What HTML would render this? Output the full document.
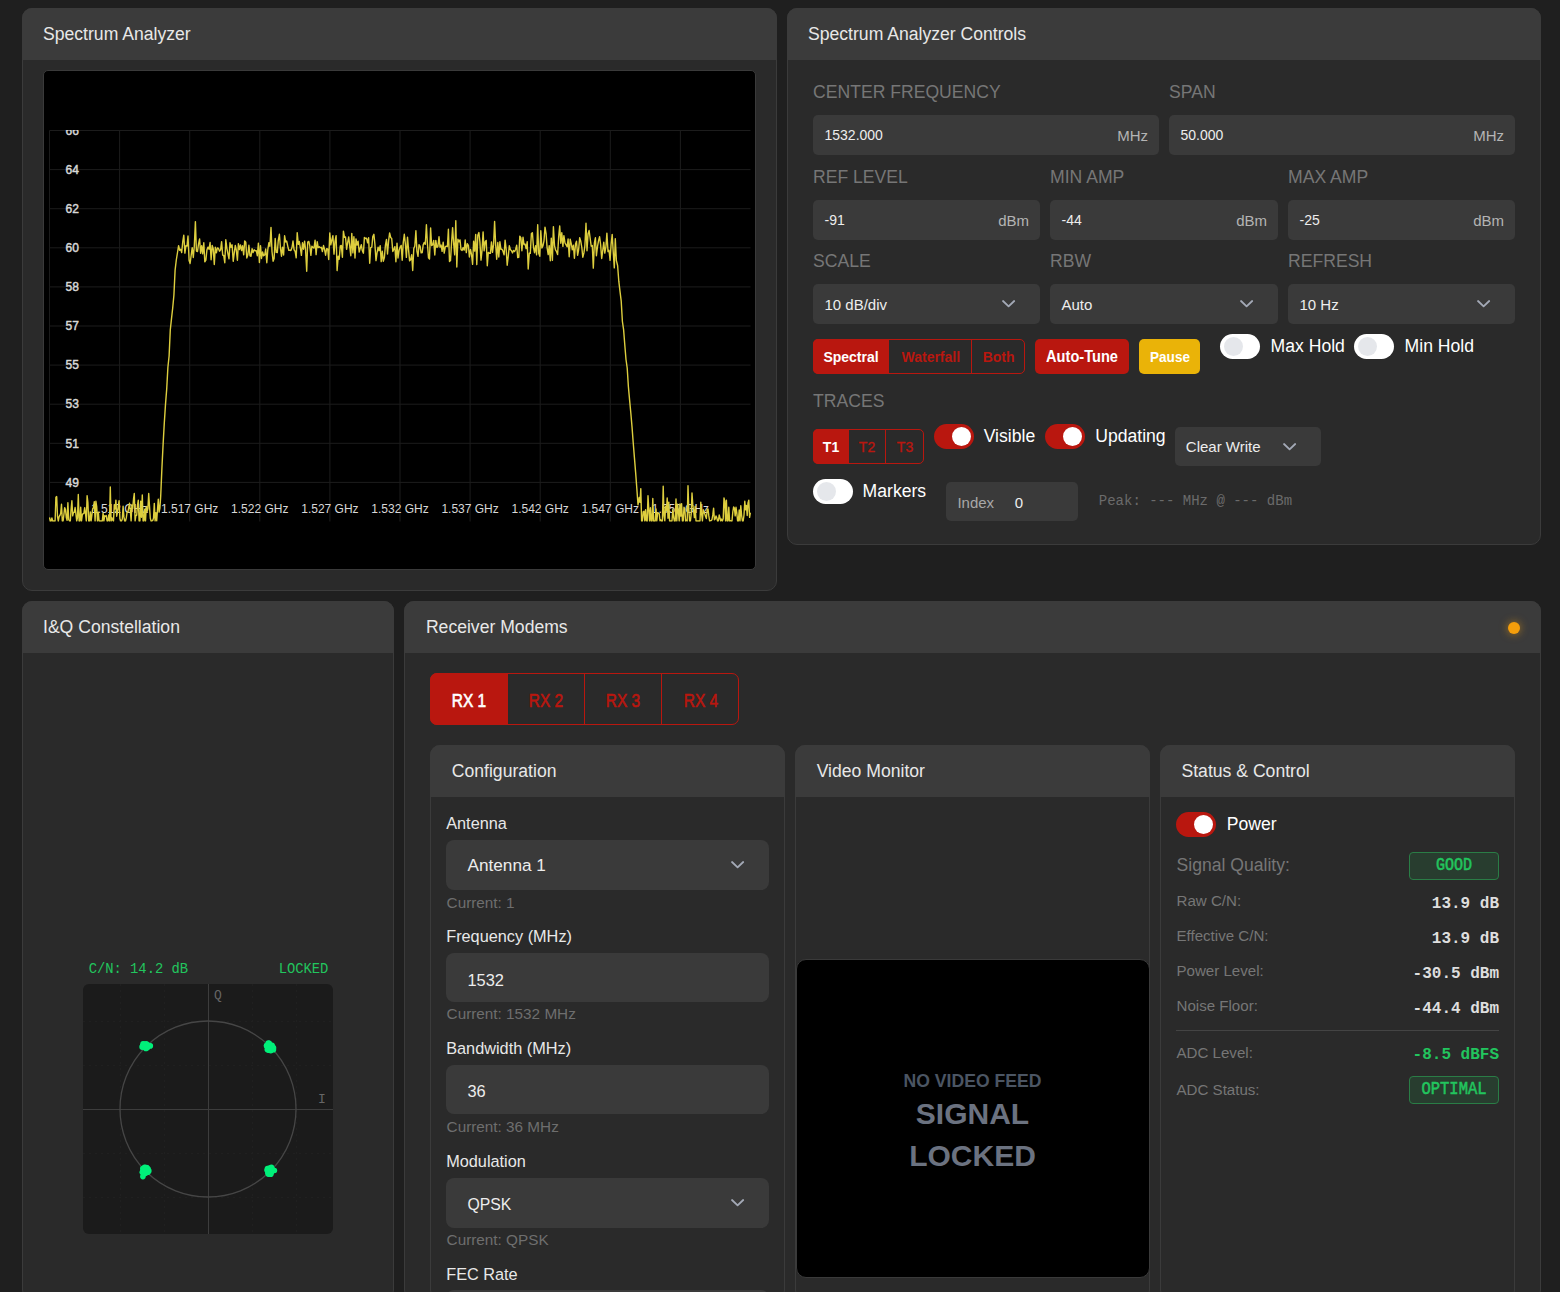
<!DOCTYPE html>
<html><head><meta charset="utf-8"><title>Spectrum Analyzer</title>
<style>
html,body{margin:0;padding:0;background:#1f1f1f;width:1560px;height:1292px;overflow:hidden;font-family:'Liberation Sans', sans-serif}
body>div,body>svg{position:absolute}
</style></head><body>
<div style="left:22px;top:8px;width:755px;height:583px;background:#2a2a2a;border:1px solid #3b3b3b;border-radius:10px;box-sizing:border-box;overflow:hidden"></div>
<div style="left:22px;top:8px;width:755px;height:52px;background:#3b3b3b;border-radius:10px 10px 0 0"></div>
<div style="left:43px;top:25.74px;font-family:'Liberation Sans', sans-serif;font-size:17.6px;line-height:17.6px;color:#e8e8e8;font-weight:400;white-space:pre;">Spectrum Analyzer</div>
<div style="left:43px;top:70px;width:713px;height:500px;background:#000;border-radius:5px;border:1px solid #3a3a3a;box-sizing:border-box"></div>
<svg style="left:0;top:0" width="800" height="600" viewBox="0 0 800 600">
<defs><clipPath id="pc"><rect x="49" y="130" width="702" height="391.8"/></clipPath></defs>
<g stroke="#1c1c1c" stroke-width="1"><line x1="49.5" y1="130.5" x2="49.5" y2="521.5"/><line x1="119.6" y1="130.5" x2="119.6" y2="521.5"/><line x1="189.7" y1="130.5" x2="189.7" y2="521.5"/><line x1="259.8" y1="130.5" x2="259.8" y2="521.5"/><line x1="329.9" y1="130.5" x2="329.9" y2="521.5"/><line x1="400.0" y1="130.5" x2="400.0" y2="521.5"/><line x1="470.1" y1="130.5" x2="470.1" y2="521.5"/><line x1="540.2" y1="130.5" x2="540.2" y2="521.5"/><line x1="610.3" y1="130.5" x2="610.3" y2="521.5"/><line x1="680.4" y1="130.5" x2="680.4" y2="521.5"/><line x1="49.5" y1="130.5" x2="750.5" y2="130.5"/><line x1="49.5" y1="169.6" x2="750.5" y2="169.6"/><line x1="49.5" y1="208.7" x2="750.5" y2="208.7"/><line x1="49.5" y1="247.8" x2="750.5" y2="247.8"/><line x1="49.5" y1="286.9" x2="750.5" y2="286.9"/><line x1="49.5" y1="326.0" x2="750.5" y2="326.0"/><line x1="49.5" y1="365.1" x2="750.5" y2="365.1"/><line x1="49.5" y1="404.2" x2="750.5" y2="404.2"/><line x1="49.5" y1="443.3" x2="750.5" y2="443.3"/><line x1="49.5" y1="482.4" x2="750.5" y2="482.4"/></g>
<g clip-path="url(#pc)" font-family="Liberation Sans" font-size="12" fill="#d8d8d8"><text x="65.5" y="134.7" stroke="#d8d8d8" stroke-width="0.45">66</text><text x="65.5" y="173.8" stroke="#d8d8d8" stroke-width="0.45">64</text><text x="65.5" y="212.9" stroke="#d8d8d8" stroke-width="0.45">62</text><text x="65.5" y="252.0" stroke="#d8d8d8" stroke-width="0.45">60</text><text x="65.5" y="291.1" stroke="#d8d8d8" stroke-width="0.45">58</text><text x="65.5" y="330.2" stroke="#d8d8d8" stroke-width="0.45">57</text><text x="65.5" y="369.3" stroke="#d8d8d8" stroke-width="0.45">55</text><text x="65.5" y="408.4" stroke="#d8d8d8" stroke-width="0.45">53</text><text x="65.5" y="447.5" stroke="#d8d8d8" stroke-width="0.45">51</text><text x="65.5" y="486.6" stroke="#d8d8d8" stroke-width="0.45">49</text><text x="119.6" y="513" text-anchor="middle">1.512 GHz</text><text x="189.7" y="513" text-anchor="middle">1.517 GHz</text><text x="259.8" y="513" text-anchor="middle">1.522 GHz</text><text x="329.9" y="513" text-anchor="middle">1.527 GHz</text><text x="400.0" y="513" text-anchor="middle">1.532 GHz</text><text x="470.1" y="513" text-anchor="middle">1.537 GHz</text><text x="540.2" y="513" text-anchor="middle">1.542 GHz</text><text x="610.3" y="513" text-anchor="middle">1.547 GHz</text><text x="680.4" y="513" text-anchor="middle">1.552 GHz</text></g>
<path d="M49.5,517.4 L50.3,521.0 L51.1,521.0 L51.9,518.0 L52.7,521.0 L53.5,521.0 L54.3,521.0 L55.1,521.0 L55.9,497.3 L56.7,496.6 L57.5,516.7 L58.3,521.0 L59.1,516.7 L59.9,515.5 L60.7,513.2 L61.5,504.2 L62.3,521.0 L63.1,521.0 L63.9,514.7 L64.7,507.6 L65.5,509.7 L66.3,517.6 L67.1,520.3 L67.9,502.7 L68.7,519.5 L69.5,521.0 L70.3,521.0 L71.1,509.4 L71.9,500.8 L72.7,515.9 L73.5,512.4 L74.3,512.4 L75.1,507.5 L75.9,513.6 L76.7,521.0 L77.5,517.6 L78.3,494.4 L79.1,521.0 L79.9,521.0 L80.7,507.3 L81.5,521.0 L82.3,514.9 L83.1,513.7 L83.9,513.3 L84.7,507.6 L85.5,513.6 L86.3,521.0 L87.1,495.6 L87.9,502.6 L88.7,521.0 L89.5,521.0 L90.3,511.9 L91.1,521.0 L91.9,515.2 L92.7,508.7 L93.5,507.7 L94.3,501.7 L95.1,521.0 L95.9,501.3 L96.7,506.6 L97.5,521.0 L98.3,512.2 L99.1,521.0 L99.9,521.0 L100.7,521.0 L101.5,521.0 L102.3,521.0 L103.1,513.1 L103.9,521.0 L104.7,515.8 L105.5,516.3 L106.3,515.6 L107.1,521.0 L107.9,521.0 L108.7,515.0 L109.5,521.0 L110.3,487.0 L111.1,521.0 L111.9,517.8 L112.7,520.1 L113.5,521.0 L114.3,504.6 L115.1,509.0 L115.9,500.1 L116.7,516.2 L117.5,512.3 L118.3,505.8 L119.1,500.7 L119.9,518.5 L120.7,521.0 L121.5,521.0 L122.3,519.0 L123.1,506.3 L123.9,516.9 L124.7,521.0 L125.5,521.0 L126.3,517.9 L127.1,512.1 L127.9,512.4 L128.7,507.5 L129.5,503.3 L130.3,510.5 L131.1,521.0 L131.9,505.0 L132.7,508.5 L133.5,499.2 L134.3,493.4 L135.1,521.0 L135.9,515.4 L136.7,515.3 L137.5,505.1 L138.3,500.2 L139.1,521.0 L139.9,521.0 L140.7,501.1 L141.5,517.3 L142.3,495.0 L143.1,521.0 L143.9,521.0 L144.7,509.3 L145.5,521.0 L146.3,506.4 L147.1,511.6 L147.9,508.7 L148.7,493.5 L149.5,506.0 L150.3,518.3 L151.1,521.0 L151.9,521.0 L152.7,520.4 L153.5,518.2 L154.3,503.4 L155.1,521.0 L155.9,512.6 L156.7,520.9 L157.5,509.7 L158.3,499.1 L159.1,512.1 L159.9,508.4 L160.7,496.1 L161.9,468.4 L163.1,444.4 L164.3,422.9 L165.5,404.4 L166.7,389.1 L167.9,367.2 L169.1,356.0 L170.3,329.8 L171.5,318.6 L172.7,308.0 L173.9,295.3 L175.1,270.1 L176.3,260.0 L177.5,252.5 L178.6,245.7 L179.6,250.2 L180.7,249.2 L181.7,252.5 L182.8,241.3 L183.8,235.2 L184.9,253.1 L185.9,245.8 L187.0,246.1 L188.0,236.0 L189.1,260.5 L190.1,263.5 L191.2,255.1 L192.2,247.6 L193.3,257.5 L194.3,246.2 L195.4,221.6 L196.4,251.0 L197.5,251.5 L198.5,244.2 L199.6,238.9 L200.6,253.3 L201.7,245.6 L202.7,253.8 L203.8,242.7 L204.8,261.8 L205.9,260.1 L206.9,250.1 L208.0,247.1 L209.0,249.3 L210.1,242.5 L211.1,259.7 L212.2,245.4 L213.2,248.4 L214.3,264.5 L215.3,247.2 L216.4,252.8 L217.4,247.9 L218.5,248.4 L219.5,251.2 L220.6,249.9 L221.6,241.6 L222.7,255.1 L223.7,255.4 L224.8,262.7 L225.8,239.8 L226.9,248.3 L227.9,253.6 L229.0,258.8 L230.0,242.8 L231.1,247.3 L232.1,244.8 L233.2,261.3 L234.2,253.3 L235.3,245.4 L236.3,250.0 L237.4,260.3 L238.4,243.6 L239.5,249.6 L240.5,244.9 L241.6,250.5 L242.6,245.8 L243.7,254.8 L244.7,240.9 L245.8,242.3 L246.8,258.0 L247.9,254.7 L248.9,245.2 L250.0,255.9 L251.0,256.3 L252.1,248.6 L253.1,252.6 L254.2,249.8 L255.2,250.7 L256.3,250.6 L257.3,255.7 L258.4,243.1 L259.4,262.5 L260.5,245.6 L261.5,258.5 L262.6,251.9 L263.6,255.7 L264.7,255.0 L265.7,249.0 L266.8,262.7 L267.8,249.6 L268.9,242.6 L269.9,246.3 L271.0,227.4 L272.0,251.5 L273.1,261.2 L274.1,258.4 L275.2,238.5 L276.2,252.4 L277.3,252.6 L278.3,240.3 L279.4,234.3 L280.4,247.5 L281.5,256.2 L282.5,247.1 L283.6,255.0 L284.6,235.8 L285.7,242.0 L286.7,241.1 L287.8,246.3 L288.8,250.4 L289.9,250.3 L290.9,250.5 L292.0,247.6 L293.0,241.0 L294.1,249.9 L295.1,251.2 L296.2,257.8 L297.2,232.6 L298.3,244.4 L299.3,241.5 L300.4,248.2 L301.4,255.4 L302.5,242.8 L303.5,249.2 L304.6,241.2 L305.6,250.2 L306.7,271.3 L307.7,242.1 L308.8,241.4 L309.8,245.8 L310.9,255.3 L311.9,246.1 L313.0,247.5 L314.0,248.1 L315.1,240.2 L316.1,254.6 L317.2,241.7 L318.2,247.6 L319.3,246.8 L320.3,247.7 L321.4,247.3 L322.4,251.6 L323.5,245.5 L324.5,249.2 L325.6,255.2 L326.6,248.7 L327.7,248.9 L328.7,259.5 L329.8,232.9 L330.8,244.9 L331.9,239.8 L332.9,235.6 L334.0,254.1 L335.0,241.4 L336.1,235.6 L337.1,270.6 L338.2,256.1 L339.2,259.2 L340.3,245.8 L341.3,245.4 L342.4,257.2 L343.4,231.2 L344.5,237.3 L345.5,237.0 L346.6,249.3 L347.6,242.9 L348.7,236.9 L349.7,245.8 L350.8,255.7 L351.8,233.4 L352.9,252.9 L353.9,236.8 L355.0,258.0 L356.0,238.9 L357.1,245.1 L358.1,241.3 L359.2,252.1 L360.2,248.3 L361.3,244.6 L362.3,250.6 L363.4,253.2 L364.4,237.4 L365.5,238.5 L366.5,238.2 L367.6,242.9 L368.6,237.8 L369.7,263.3 L370.7,247.6 L371.8,247.1 L372.8,236.6 L373.9,234.3 L374.9,244.3 L376.0,260.6 L377.0,253.1 L378.1,247.1 L379.1,250.7 L380.2,245.7 L381.2,261.6 L382.3,251.2 L383.3,261.3 L384.4,257.5 L385.4,245.5 L386.5,239.5 L387.5,254.0 L388.6,240.9 L389.6,233.0 L390.7,237.5 L391.7,238.4 L392.8,251.5 L393.8,249.4 L394.9,246.6 L395.9,261.8 L397.0,243.1 L398.0,258.0 L399.1,250.2 L400.1,247.2 L401.2,245.4 L402.2,260.3 L403.3,242.1 L404.3,234.3 L405.4,244.2 L406.4,257.4 L407.5,237.1 L408.5,249.1 L409.6,260.9 L410.6,259.8 L411.7,254.7 L412.7,270.5 L413.8,248.4 L414.8,246.2 L415.9,230.7 L416.9,251.1 L418.0,256.4 L419.0,244.8 L420.1,246.1 L421.1,252.9 L422.2,252.6 L423.2,244.7 L424.3,242.4 L425.3,244.3 L426.4,224.7 L427.4,243.4 L428.5,257.9 L429.5,259.0 L430.6,227.9 L431.6,245.6 L432.7,244.8 L433.7,240.4 L434.8,255.0 L435.8,240.4 L436.9,247.4 L437.9,246.7 L439.0,236.8 L440.0,247.1 L441.1,245.0 L442.1,251.3 L443.2,242.2 L444.2,253.1 L445.3,246.8 L446.3,246.1 L447.4,246.6 L448.4,229.3 L449.5,261.5 L450.5,260.6 L451.6,242.0 L452.6,227.6 L453.7,244.3 L454.7,254.9 L455.8,220.7 L456.8,267.0 L457.9,239.2 L458.9,241.9 L460.0,239.9 L461.0,249.6 L462.1,250.4 L463.1,247.6 L464.2,250.1 L465.2,240.0 L466.3,252.6 L467.3,243.7 L468.4,245.3 L469.4,257.0 L470.5,249.5 L471.5,254.4 L472.6,264.3 L473.6,241.2 L474.7,251.1 L475.7,234.5 L476.8,264.6 L477.8,235.2 L478.9,232.6 L479.9,241.9 L481.0,260.1 L482.0,250.7 L483.1,231.9 L484.1,250.8 L485.2,241.6 L486.2,240.4 L487.3,265.8 L488.3,252.4 L489.4,253.2 L490.4,253.4 L491.5,241.9 L492.5,252.4 L493.6,244.4 L494.6,221.5 L495.7,245.3 L496.7,259.2 L497.8,242.5 L498.8,257.0 L499.9,241.8 L500.9,249.4 L502.0,249.3 L503.0,251.3 L504.1,254.8 L505.1,240.1 L506.2,249.7 L507.2,265.2 L508.3,255.8 L509.3,245.8 L510.4,249.7 L511.4,250.5 L512.5,252.9 L513.5,250.4 L514.6,251.5 L515.6,249.5 L516.7,245.3 L517.7,257.6 L518.8,257.3 L519.8,236.1 L520.9,237.9 L521.9,250.7 L523.0,237.2 L524.0,244.5 L525.1,244.1 L526.1,248.6 L527.2,241.8 L528.2,269.0 L529.3,253.3 L530.3,253.4 L531.4,233.5 L532.4,232.7 L533.5,247.3 L534.5,252.7 L535.6,245.8 L536.6,254.8 L537.7,224.7 L538.7,253.2 L539.8,256.3 L540.8,230.8 L541.9,248.0 L542.9,246.0 L544.0,240.8 L545.0,227.1 L546.1,233.8 L547.1,247.6 L548.2,254.6 L549.2,245.6 L550.3,260.7 L551.3,238.1 L552.4,260.4 L553.4,226.6 L554.5,245.6 L555.5,249.9 L556.6,251.7 L557.6,254.6 L558.7,236.6 L559.7,226.0 L560.8,243.2 L561.8,232.7 L562.9,246.4 L563.9,235.6 L565.0,243.0 L566.0,244.6 L567.1,246.8 L568.1,239.0 L569.2,256.8 L570.2,239.2 L571.3,243.8 L572.3,249.8 L573.4,245.2 L574.4,258.2 L575.5,244.0 L576.5,241.2 L577.6,255.3 L578.6,250.0 L579.7,237.6 L580.7,240.9 L581.8,247.3 L582.8,257.3 L583.9,252.9 L584.9,245.8 L586.0,223.2 L587.0,250.8 L588.1,233.8 L589.1,230.5 L590.2,238.7 L591.2,246.2 L592.3,245.6 L593.3,268.1 L594.4,243.0 L595.4,237.8 L596.4,255.7 L597.5,246.6 L598.5,240.9 L599.6,236.8 L600.6,244.5 L601.7,258.5 L602.7,250.9 L603.8,242.2 L604.8,253.1 L605.9,246.8 L606.9,233.1 L608.0,251.6 L609.0,250.2 L610.1,260.3 L611.1,244.3 L612.2,234.4 L613.2,251.6 L614.3,267.9 L615.3,238.7 L616.4,260.7 L617.6,265.5 L618.8,281.2 L620.0,291.4 L621.2,301.0 L622.4,321.5 L623.6,329.6 L624.8,345.0 L626.0,359.5 L627.2,368.0 L628.4,386.7 L629.6,400.1 L630.8,412.8 L632.0,426.6 L633.2,442.5 L634.4,457.4 L635.6,472.1 L636.8,488.1 L638.0,504.8 L639.2,497.5 L640.0,502.4 L640.8,488.6 L641.6,521.0 L642.4,521.0 L643.2,511.9 L644.0,511.2 L644.8,521.0 L645.6,509.7 L646.4,520.8 L647.2,521.0 L648.0,495.7 L648.8,509.7 L649.6,521.0 L650.4,507.7 L651.2,521.0 L652.0,521.0 L652.8,498.5 L653.6,521.0 L654.4,521.0 L655.2,521.0 L656.0,508.9 L656.8,521.0 L657.6,513.4 L658.4,512.9 L659.2,513.7 L660.0,520.8 L660.8,519.8 L661.6,521.0 L662.4,521.0 L663.2,486.3 L664.0,515.6 L664.8,520.9 L665.6,506.2 L666.4,510.7 L667.2,498.0 L668.0,518.3 L668.8,502.1 L669.6,521.0 L670.4,521.0 L671.2,521.0 L672.0,521.0 L672.8,509.2 L673.6,517.0 L674.4,521.0 L675.2,521.0 L676.0,499.0 L676.8,521.0 L677.6,504.1 L678.4,511.3 L679.2,521.0 L680.0,504.0 L680.8,516.1 L681.6,503.6 L682.4,521.0 L683.2,521.0 L684.0,507.3 L684.8,508.8 L685.6,521.0 L686.4,520.2 L687.2,521.0 L688.0,485.7 L688.8,509.7 L689.6,521.0 L690.4,521.0 L691.2,514.2 L692.0,493.0 L692.8,504.9 L693.6,510.7 L694.4,517.6 L695.2,506.2 L696.0,521.0 L696.8,521.0 L697.6,521.0 L698.4,521.0 L699.2,521.0 L700.0,521.0 L700.8,502.3 L701.6,513.8 L702.4,521.0 L703.2,509.7 L704.0,512.6 L704.8,514.0 L705.6,516.5 L706.4,518.5 L707.2,509.3 L708.0,509.0 L708.8,515.7 L709.6,521.0 L710.4,520.7 L711.2,520.6 L712.0,519.5 L712.8,514.9 L713.6,508.1 L714.4,519.7 L715.2,518.9 L716.0,515.9 L716.8,517.8 L717.6,521.0 L718.4,520.8 L719.2,515.0 L720.0,518.0 L720.8,521.0 L721.6,519.1 L722.4,521.0 L723.2,518.5 L724.0,497.9 L724.8,501.4 L725.6,521.0 L726.4,500.2 L727.2,521.0 L728.0,521.0 L728.8,507.3 L729.6,521.0 L730.4,520.6 L731.2,521.0 L732.0,521.0 L732.8,512.0 L733.6,507.0 L734.4,508.2 L735.2,515.9 L736.0,507.3 L736.8,512.7 L737.6,521.0 L738.4,521.0 L739.2,510.0 L740.0,521.0 L740.8,505.8 L741.6,515.3 L742.4,521.0 L743.2,521.0 L744.0,515.0 L744.8,501.2 L745.6,509.8 L746.4,505.4 L747.2,515.5 L748.0,502.9 L748.8,500.2 L749.6,517.4 L750.4,512.6" fill="none" stroke="#ddce3e" stroke-width="1.4" stroke-linejoin="round" clip-path="url(#pc)"/>
</svg>
<div style="left:787px;top:8px;width:754px;height:537px;background:#2a2a2a;border:1px solid #3b3b3b;border-radius:10px;box-sizing:border-box;overflow:hidden"></div>
<div style="left:787px;top:8px;width:754px;height:52px;background:#3b3b3b;border-radius:10px 10px 0 0"></div>
<div style="left:808px;top:25.74px;font-family:'Liberation Sans', sans-serif;font-size:17.6px;line-height:17.6px;color:#e8e8e8;font-weight:400;white-space:pre;">Spectrum Analyzer Controls</div>
<div style="left:813px;top:83.94px;font-family:'Liberation Sans', sans-serif;font-size:17.6px;line-height:17.6px;color:#767676;font-weight:400;white-space:pre;">CENTER FREQUENCY</div>
<div style="left:1169px;top:83.94px;font-family:'Liberation Sans', sans-serif;font-size:17.6px;line-height:17.6px;color:#767676;font-weight:400;white-space:pre;">SPAN</div>
<div style="left:813px;top:115px;width:346px;height:40px;background:#3a3a3a;border-radius:5px"></div>
<div style="left:824.5px;top:128.40px;font-family:'Liberation Sans', sans-serif;font-size:14px;line-height:14px;color:#ededed;font-weight:400;white-space:pre;">1532.000</div>
<div style="right:412px;top:128.35px;font-family:'Liberation Sans', sans-serif;font-size:15px;line-height:15px;color:#b4b4b4;font-weight:400;white-space:pre;">MHz</div>
<div style="left:1169px;top:115px;width:346px;height:40px;background:#3a3a3a;border-radius:5px"></div>
<div style="left:1180.5px;top:128.40px;font-family:'Liberation Sans', sans-serif;font-size:14px;line-height:14px;color:#ededed;font-weight:400;white-space:pre;">50.000</div>
<div style="right:56px;top:128.35px;font-family:'Liberation Sans', sans-serif;font-size:15px;line-height:15px;color:#b4b4b4;font-weight:400;white-space:pre;">MHz</div>
<div style="left:813px;top:169.04px;font-family:'Liberation Sans', sans-serif;font-size:17.6px;line-height:17.6px;color:#767676;font-weight:400;white-space:pre;">REF LEVEL</div>
<div style="left:1050px;top:169.04px;font-family:'Liberation Sans', sans-serif;font-size:17.6px;line-height:17.6px;color:#767676;font-weight:400;white-space:pre;">MIN AMP</div>
<div style="left:1288px;top:169.04px;font-family:'Liberation Sans', sans-serif;font-size:17.6px;line-height:17.6px;color:#767676;font-weight:400;white-space:pre;">MAX AMP</div>
<div style="left:813px;top:200px;width:227px;height:40px;background:#3a3a3a;border-radius:5px"></div>
<div style="left:824.5px;top:213.40px;font-family:'Liberation Sans', sans-serif;font-size:14px;line-height:14px;color:#ededed;font-weight:400;white-space:pre;">-91</div>
<div style="right:531px;top:213.35px;font-family:'Liberation Sans', sans-serif;font-size:15px;line-height:15px;color:#b4b4b4;font-weight:400;white-space:pre;">dBm</div>
<div style="left:1050px;top:200px;width:228px;height:40px;background:#3a3a3a;border-radius:5px"></div>
<div style="left:1061.5px;top:213.40px;font-family:'Liberation Sans', sans-serif;font-size:14px;line-height:14px;color:#ededed;font-weight:400;white-space:pre;">-44</div>
<div style="right:293px;top:213.35px;font-family:'Liberation Sans', sans-serif;font-size:15px;line-height:15px;color:#b4b4b4;font-weight:400;white-space:pre;">dBm</div>
<div style="left:1288px;top:200px;width:227px;height:40px;background:#3a3a3a;border-radius:5px"></div>
<div style="left:1299.5px;top:213.40px;font-family:'Liberation Sans', sans-serif;font-size:14px;line-height:14px;color:#ededed;font-weight:400;white-space:pre;">-25</div>
<div style="right:56px;top:213.35px;font-family:'Liberation Sans', sans-serif;font-size:15px;line-height:15px;color:#b4b4b4;font-weight:400;white-space:pre;">dBm</div>
<div style="left:813px;top:253.24px;font-family:'Liberation Sans', sans-serif;font-size:17.6px;line-height:17.6px;color:#767676;font-weight:400;white-space:pre;">SCALE</div>
<div style="left:1050px;top:253.24px;font-family:'Liberation Sans', sans-serif;font-size:17.6px;line-height:17.6px;color:#767676;font-weight:400;white-space:pre;">RBW</div>
<div style="left:1288px;top:253.24px;font-family:'Liberation Sans', sans-serif;font-size:17.6px;line-height:17.6px;color:#767676;font-weight:400;white-space:pre;">REFRESH</div>
<div style="left:813px;top:284px;width:227px;height:40px;background:#3a3a3a;border-radius:5px"></div>
<div style="left:824.5px;top:297.25px;font-family:'Liberation Sans', sans-serif;font-size:15px;line-height:15px;color:#ededed;font-weight:400;white-space:pre;">10 dB/div</div>
<svg style="left:1000.1999999999999px;top:298.1px" width="17.2" height="11.4"><path d="M3,3 L8.6,8.4 L14.2,3" fill="none" stroke="#a3a9b6" stroke-width="1.8" stroke-linecap="round" stroke-linejoin="round"/></svg>
<div style="left:1050px;top:284px;width:228px;height:40px;background:#3a3a3a;border-radius:5px"></div>
<div style="left:1061.5px;top:297.25px;font-family:'Liberation Sans', sans-serif;font-size:15px;line-height:15px;color:#ededed;font-weight:400;white-space:pre;">Auto</div>
<svg style="left:1238.2px;top:298.1px" width="17.2" height="11.4"><path d="M3,3 L8.6,8.4 L14.2,3" fill="none" stroke="#a3a9b6" stroke-width="1.8" stroke-linecap="round" stroke-linejoin="round"/></svg>
<div style="left:1288px;top:284px;width:227px;height:40px;background:#3a3a3a;border-radius:5px"></div>
<div style="left:1299.5px;top:297.25px;font-family:'Liberation Sans', sans-serif;font-size:15px;line-height:15px;color:#ededed;font-weight:400;white-space:pre;">10 Hz</div>
<svg style="left:1475.2px;top:298.1px" width="17.2" height="11.4"><path d="M3,3 L8.6,8.4 L14.2,3" fill="none" stroke="#a3a9b6" stroke-width="1.8" stroke-linecap="round" stroke-linejoin="round"/></svg>
<div style="left:813px;top:339px;width:212px;height:35px;border:1px solid #b9170f;border-radius:5px;box-sizing:border-box"></div>
<div style="left:813px;top:339px;width:76px;height:35px;background:#b9170f;border-radius:5px 0 0 5px"></div>
<div style="left:971px;top:339px;width:1px;height:35px;background:#b9170f"></div>
<div style="left:551px;width:600px;text-align:center;top:349.90px;font-family:'Liberation Sans', sans-serif;font-size:14px;line-height:14px;color:#fff;font-weight:700;white-space:pre;transform:scaleY(1.1)">Spectral</div>
<div style="left:630.8px;width:600px;text-align:center;top:349.90px;font-family:'Liberation Sans', sans-serif;font-size:14px;line-height:14px;color:#b9170f;font-weight:700;white-space:pre;transform:scaleY(1.1)">Waterfall</div>
<div style="left:698.6px;width:600px;text-align:center;top:349.90px;font-family:'Liberation Sans', sans-serif;font-size:14px;line-height:14px;color:#b9170f;font-weight:700;white-space:pre;transform:scaleY(1.1)">Both</div>
<div style="left:1035px;top:339px;width:94px;height:35px;background:#b9170f;border-radius:5px"></div>
<div style="left:782px;width:600px;text-align:center;top:349.59px;font-family:'Liberation Sans', sans-serif;font-size:14.6px;line-height:14.6px;color:#fff;font-weight:700;white-space:pre;transform:scaleY(1.1)">Auto-Tune</div>
<div style="left:1139px;top:339px;width:61px;height:35px;background:#eab308;border-radius:5px"></div>
<div style="left:869.5px;width:600px;text-align:center;top:349.90px;font-family:'Liberation Sans', sans-serif;font-size:14px;line-height:14px;color:#fff;font-weight:700;white-space:pre;transform:scale(0.97,1.1)">Pause</div>
<div style="left:1220px;top:334px;width:40px;height:25px;background:#fff;border-radius:13px"></div>
<div style="left:1224px;top:337px;width:19px;height:19px;border-radius:50%;background:#e5e7eb"></div>
<div style="left:1270.6px;top:337.94px;font-family:'Liberation Sans', sans-serif;font-size:17.6px;line-height:17.6px;color:#fff;font-weight:400;white-space:pre;">Max Hold</div>
<div style="left:1354px;top:334px;width:40px;height:25px;background:#fff;border-radius:13px"></div>
<div style="left:1358px;top:337px;width:19px;height:19px;border-radius:50%;background:#e5e7eb"></div>
<div style="left:1404.6px;top:337.94px;font-family:'Liberation Sans', sans-serif;font-size:17.6px;line-height:17.6px;color:#fff;font-weight:400;white-space:pre;">Min Hold</div>
<div style="left:813px;top:393.04px;font-family:'Liberation Sans', sans-serif;font-size:17.6px;line-height:17.6px;color:#767676;font-weight:400;white-space:pre;">TRACES</div>
<div style="left:813px;top:429px;width:111px;height:35px;border:1px solid #b9170f;border-radius:5px;box-sizing:border-box"></div>
<div style="left:813px;top:429px;width:36px;height:35px;background:#b9170f;border-radius:5px 0 0 5px"></div>
<div style="left:885px;top:429px;width:1px;height:35px;background:#b9170f"></div>
<div style="left:531px;width:600px;text-align:center;top:439.60px;font-family:'Liberation Sans', sans-serif;font-size:14px;line-height:14px;color:#fff;font-weight:700;white-space:pre;">T1</div>
<div style="left:567px;width:600px;text-align:center;top:439.60px;font-family:'Liberation Sans', sans-serif;font-size:14px;line-height:14px;color:#b9170f;font-weight:400;white-space:pre;-webkit-text-stroke:0.35px #b9170f">T2</div>
<div style="left:605px;width:600px;text-align:center;top:439.60px;font-family:'Liberation Sans', sans-serif;font-size:14px;line-height:14px;color:#b9170f;font-weight:400;white-space:pre;-webkit-text-stroke:0.35px #b9170f">T3</div>
<div style="left:934px;top:424px;width:40px;height:25px;background:#b9170f;border-radius:13px"></div>
<div style="left:952px;top:427px;width:19px;height:19px;border-radius:50%;background:#fff"></div>
<div style="left:983.7px;top:428.34px;font-family:'Liberation Sans', sans-serif;font-size:17.6px;line-height:17.6px;color:#fff;font-weight:400;white-space:pre;">Visible</div>
<div style="left:1045px;top:424px;width:40px;height:25px;background:#b9170f;border-radius:13px"></div>
<div style="left:1063px;top:427px;width:19px;height:19px;border-radius:50%;background:#fff"></div>
<div style="left:1095.2px;top:428.34px;font-family:'Liberation Sans', sans-serif;font-size:17.6px;line-height:17.6px;color:#fff;font-weight:400;white-space:pre;">Updating</div>
<div style="left:1175px;top:427px;width:146px;height:39px;background:#3a3a3a;border-radius:5px"></div>
<div style="left:1185.8px;top:439.25px;font-family:'Liberation Sans', sans-serif;font-size:15px;line-height:15px;color:#ededed;font-weight:400;white-space:pre;">Clear Write</div>
<svg style="left:1281.1000000000001px;top:440.5px" width="17.2" height="11.4"><path d="M3,3 L8.6,8.4 L14.2,3" fill="none" stroke="#a3a9b6" stroke-width="1.8" stroke-linecap="round" stroke-linejoin="round"/></svg>
<div style="left:813px;top:479px;width:40px;height:25px;background:#fff;border-radius:13px"></div>
<div style="left:817px;top:482px;width:19px;height:19px;border-radius:50%;background:#e5e7eb"></div>
<div style="left:862.6px;top:482.64px;font-family:'Liberation Sans', sans-serif;font-size:17.6px;line-height:17.6px;color:#fff;font-weight:400;white-space:pre;">Markers</div>
<div style="left:946px;top:482px;width:132px;height:39px;background:#3a3a3a;border-radius:5px"></div>
<div style="left:957.4px;top:494.65px;font-family:'Liberation Sans', sans-serif;font-size:15px;line-height:15px;color:#a8a8a8;font-weight:400;white-space:pre;">Index</div>
<div style="left:1014.7px;top:494.65px;font-family:'Liberation Sans', sans-serif;font-size:15px;line-height:15px;color:#ededed;font-weight:400;white-space:pre;">0</div>
<div style="left:1098.8px;top:494.36px;font-family:'Liberation Mono', monospace;font-size:14px;line-height:14px;color:#6b6b6b;font-weight:400;white-space:pre;">Peak: --- MHz @ --- dBm</div>
<div style="left:22px;top:601px;width:372px;height:699px;background:#2a2a2a;border:1px solid #3b3b3b;border-radius:10px;box-sizing:border-box;overflow:hidden"></div>
<div style="left:22px;top:601px;width:372px;height:52px;background:#3b3b3b;border-radius:10px 10px 0 0"></div>
<div style="left:43px;top:618.94px;font-family:'Liberation Sans', sans-serif;font-size:17.6px;line-height:17.6px;color:#e8e8e8;font-weight:400;white-space:pre;">I&amp;Q Constellation</div>
<div style="left:88.7px;top:962.51px;font-family:'Liberation Mono', monospace;font-size:13.8px;line-height:13.8px;color:#22c55e;font-weight:400;white-space:pre;">C/N: 14.2 dB</div>
<div style="right:1231.7px;top:962.51px;font-family:'Liberation Mono', monospace;font-size:13.8px;line-height:13.8px;color:#22c55e;font-weight:400;white-space:pre;">LOCKED</div>
<div style="left:83px;top:984px;width:250px;height:250px;background:#1b1b1b;border-radius:6px"></div>
<svg style="left:0;top:0" width="400" height="1292" viewBox="0 0 400 1292">
<g stroke="#202020" stroke-width="1" stroke-dasharray="2,4"><line x1="120.5" y1="984" x2="120.5" y2="1234"/><line x1="164.5" y1="984" x2="164.5" y2="1234"/><line x1="252.5" y1="984" x2="252.5" y2="1234"/><line x1="296.5" y1="984" x2="296.5" y2="1234"/><line x1="83" y1="1021.5" x2="333" y2="1021.5"/><line x1="83" y1="1065.5" x2="333" y2="1065.5"/><line x1="83" y1="1153.5" x2="333" y2="1153.5"/><line x1="83" y1="1197.5" x2="333" y2="1197.5"/></g>
<line x1="208.5" y1="984" x2="208.5" y2="1234" stroke="#3d3d3d" stroke-width="1"/>
<line x1="83" y1="1109.5" x2="333" y2="1109.5" stroke="#3d3d3d" stroke-width="1"/>
<circle cx="208" cy="1109" r="88" fill="none" stroke="#464646" stroke-width="1.3"/>
<g fill="#00f07a"><circle cx="143.0" cy="1046.6" r="2.8"/><circle cx="146.6" cy="1045.2" r="2.8"/><circle cx="142.9" cy="1045.9" r="2.8"/><circle cx="145.8" cy="1047.8" r="2.8"/><circle cx="143.1" cy="1043.9" r="2.8"/><circle cx="146.1" cy="1046.8" r="2.8"/><circle cx="147.5" cy="1047.6" r="2.8"/><circle cx="144.8" cy="1045.6" r="2.8"/><circle cx="149.1" cy="1045.5" r="2.8"/><circle cx="143.7" cy="1044.2" r="2.8"/><circle cx="145.2" cy="1046.2" r="2.8"/><circle cx="144.4" cy="1045.9" r="2.8"/><circle cx="145.4" cy="1047.1" r="2.8"/><circle cx="146.8" cy="1046.3" r="2.8"/><circle cx="142.1" cy="1047.1" r="2.8"/><circle cx="142.7" cy="1045.7" r="2.8"/><circle cx="142.6" cy="1046.0" r="2.8"/><circle cx="143.8" cy="1046.3" r="2.8"/><circle cx="150.3" cy="1045.9" r="2.8"/><circle cx="146.3" cy="1043.9" r="2.8"/><circle cx="144.5" cy="1047.1" r="2.8"/><circle cx="144.9" cy="1046.6" r="2.8"/><circle cx="145.2" cy="1044.4" r="2.8"/><circle cx="145.9" cy="1044.7" r="2.8"/><circle cx="148.0" cy="1045.2" r="2.8"/><circle cx="146.1" cy="1046.0" r="2.8"/><circle cx="146.5" cy="1045.0" r="2.8"/><circle cx="146.6" cy="1045.8" r="2.8"/><circle cx="147.0" cy="1047.0" r="2.8"/><circle cx="145.2" cy="1044.8" r="2.8"/><circle cx="146.2" cy="1046.7" r="2.8"/><circle cx="147.6" cy="1045.4" r="2.8"/><circle cx="145.9" cy="1046.8" r="2.8"/><circle cx="145.5" cy="1046.3" r="2.8"/><circle cx="145.3" cy="1045.0" r="2.8"/><circle cx="143.4" cy="1045.4" r="2.8"/><circle cx="145.9" cy="1048.4" r="2.8"/><circle cx="146.6" cy="1047.7" r="2.8"/><circle cx="146.2" cy="1047.1" r="2.8"/><circle cx="145.3" cy="1047.2" r="2.8"/><circle cx="272.3" cy="1046.5" r="2.8"/><circle cx="268.4" cy="1050.1" r="2.8"/><circle cx="269.9" cy="1048.6" r="2.8"/><circle cx="270.9" cy="1045.2" r="2.8"/><circle cx="273.4" cy="1049.8" r="2.8"/><circle cx="269.8" cy="1048.2" r="2.8"/><circle cx="269.7" cy="1045.6" r="2.8"/><circle cx="269.3" cy="1047.6" r="2.8"/><circle cx="271.3" cy="1048.1" r="2.8"/><circle cx="269.6" cy="1049.2" r="2.8"/><circle cx="268.3" cy="1048.3" r="2.8"/><circle cx="271.3" cy="1046.5" r="2.8"/><circle cx="266.6" cy="1045.5" r="2.8"/><circle cx="269.9" cy="1047.8" r="2.8"/><circle cx="272.0" cy="1045.4" r="2.8"/><circle cx="269.5" cy="1048.0" r="2.8"/><circle cx="269.2" cy="1043.2" r="2.8"/><circle cx="270.8" cy="1050.7" r="2.8"/><circle cx="271.1" cy="1045.5" r="2.8"/><circle cx="268.8" cy="1047.4" r="2.8"/><circle cx="273.5" cy="1048.0" r="2.8"/><circle cx="269.7" cy="1049.5" r="2.8"/><circle cx="269.4" cy="1050.0" r="2.8"/><circle cx="268.4" cy="1046.2" r="2.8"/><circle cx="270.7" cy="1049.3" r="2.8"/><circle cx="270.5" cy="1047.5" r="2.8"/><circle cx="266.6" cy="1045.9" r="2.8"/><circle cx="268.5" cy="1046.1" r="2.8"/><circle cx="270.4" cy="1046.5" r="2.8"/><circle cx="270.8" cy="1047.1" r="2.8"/><circle cx="269.0" cy="1047.2" r="2.8"/><circle cx="270.2" cy="1048.4" r="2.8"/><circle cx="268.7" cy="1046.6" r="2.8"/><circle cx="267.3" cy="1049.6" r="2.8"/><circle cx="271.8" cy="1046.7" r="2.8"/><circle cx="268.7" cy="1045.0" r="2.8"/><circle cx="269.8" cy="1047.3" r="2.8"/><circle cx="273.0" cy="1047.4" r="2.8"/><circle cx="268.3" cy="1043.1" r="2.8"/><circle cx="271.8" cy="1047.3" r="2.8"/><circle cx="142.9" cy="1171.3" r="2.8"/><circle cx="142.9" cy="1176.6" r="2.8"/><circle cx="147.3" cy="1171.9" r="2.8"/><circle cx="145.2" cy="1167.6" r="2.8"/><circle cx="145.3" cy="1168.5" r="2.8"/><circle cx="146.5" cy="1167.6" r="2.8"/><circle cx="144.0" cy="1173.0" r="2.8"/><circle cx="148.1" cy="1169.1" r="2.8"/><circle cx="143.0" cy="1172.4" r="2.8"/><circle cx="146.9" cy="1169.4" r="2.8"/><circle cx="144.4" cy="1169.9" r="2.8"/><circle cx="143.6" cy="1169.9" r="2.8"/><circle cx="147.5" cy="1172.1" r="2.8"/><circle cx="148.8" cy="1170.9" r="2.8"/><circle cx="145.3" cy="1169.4" r="2.8"/><circle cx="145.3" cy="1168.9" r="2.8"/><circle cx="142.7" cy="1172.1" r="2.8"/><circle cx="147.8" cy="1172.3" r="2.8"/><circle cx="147.6" cy="1171.4" r="2.8"/><circle cx="144.4" cy="1171.1" r="2.8"/><circle cx="144.9" cy="1169.2" r="2.8"/><circle cx="142.8" cy="1168.6" r="2.8"/><circle cx="145.5" cy="1171.2" r="2.8"/><circle cx="144.7" cy="1173.3" r="2.8"/><circle cx="145.8" cy="1171.9" r="2.8"/><circle cx="147.4" cy="1169.7" r="2.8"/><circle cx="142.3" cy="1172.2" r="2.8"/><circle cx="144.4" cy="1173.1" r="2.8"/><circle cx="146.0" cy="1172.6" r="2.8"/><circle cx="146.7" cy="1167.7" r="2.8"/><circle cx="146.7" cy="1169.9" r="2.8"/><circle cx="144.3" cy="1170.3" r="2.8"/><circle cx="146.7" cy="1172.4" r="2.8"/><circle cx="147.1" cy="1168.3" r="2.8"/><circle cx="144.6" cy="1167.2" r="2.8"/><circle cx="145.3" cy="1172.0" r="2.8"/><circle cx="144.3" cy="1171.4" r="2.8"/><circle cx="145.9" cy="1172.6" r="2.8"/><circle cx="144.2" cy="1169.7" r="2.8"/><circle cx="144.3" cy="1173.8" r="2.8"/><circle cx="271.7" cy="1170.8" r="2.8"/><circle cx="270.4" cy="1171.2" r="2.8"/><circle cx="270.3" cy="1170.7" r="2.8"/><circle cx="269.5" cy="1169.0" r="2.8"/><circle cx="269.0" cy="1173.6" r="2.8"/><circle cx="270.9" cy="1171.1" r="2.8"/><circle cx="269.7" cy="1171.1" r="2.8"/><circle cx="270.6" cy="1170.0" r="2.8"/><circle cx="270.3" cy="1171.4" r="2.8"/><circle cx="268.8" cy="1169.7" r="2.8"/><circle cx="268.4" cy="1169.3" r="2.8"/><circle cx="271.4" cy="1167.2" r="2.8"/><circle cx="269.6" cy="1170.0" r="2.8"/><circle cx="269.0" cy="1171.2" r="2.8"/><circle cx="271.8" cy="1171.1" r="2.8"/><circle cx="269.8" cy="1170.0" r="2.8"/><circle cx="269.8" cy="1172.5" r="2.8"/><circle cx="269.4" cy="1169.2" r="2.8"/><circle cx="268.0" cy="1169.2" r="2.8"/><circle cx="267.8" cy="1172.8" r="2.8"/><circle cx="270.6" cy="1170.6" r="2.8"/><circle cx="272.3" cy="1169.9" r="2.8"/><circle cx="271.2" cy="1172.3" r="2.8"/><circle cx="267.5" cy="1168.5" r="2.8"/><circle cx="268.5" cy="1172.5" r="2.8"/><circle cx="272.1" cy="1169.0" r="2.8"/><circle cx="271.7" cy="1170.4" r="2.8"/><circle cx="269.4" cy="1170.1" r="2.8"/><circle cx="269.5" cy="1168.1" r="2.8"/><circle cx="268.4" cy="1169.0" r="2.8"/><circle cx="270.8" cy="1174.3" r="2.8"/><circle cx="274.4" cy="1170.5" r="2.8"/><circle cx="267.2" cy="1170.3" r="2.8"/><circle cx="268.5" cy="1174.2" r="2.8"/><circle cx="270.9" cy="1169.8" r="2.8"/><circle cx="271.5" cy="1171.9" r="2.8"/><circle cx="267.4" cy="1170.1" r="2.8"/><circle cx="269.6" cy="1171.0" r="2.8"/><circle cx="270.2" cy="1170.5" r="2.8"/><circle cx="270.3" cy="1170.1" r="2.8"/></g>
<text x="214" y="999" font-family="Liberation Mono" font-size="13" fill="#666">Q</text>
<text x="318" y="1103" font-family="Liberation Mono" font-size="13" fill="#666">I</text>
</svg>
<div style="left:404px;top:601px;width:1137px;height:699px;background:#2a2a2a;border:1px solid #3b3b3b;border-radius:10px;box-sizing:border-box;overflow:hidden"></div>
<div style="left:404px;top:601px;width:1137px;height:52px;background:#3b3b3b;border-radius:10px 10px 0 0"></div>
<div style="left:425.9px;top:618.94px;font-family:'Liberation Sans', sans-serif;font-size:17.6px;line-height:17.6px;color:#e8e8e8;font-weight:400;white-space:pre;">Receiver Modems</div>
<div style="left:1508px;top:621.5px;width:12px;height:12px;border-radius:50%;background:#f59e0b;box-shadow:0 0 8px rgba(245,158,11,0.6)"></div>
<div style="left:430px;top:673px;width:309px;height:52px;border:1px solid #b9170f;border-radius:7px;box-sizing:border-box"></div>
<div style="left:430px;top:673px;width:78px;height:52px;background:#b9170f;border-radius:7px 0 0 7px"></div>
<div style="left:584px;top:673px;width:1px;height:52px;background:#b9170f"></div>
<div style="left:661px;top:673px;width:1px;height:52px;background:#b9170f"></div>
<div style="left:169.3px;width:600px;text-align:center;top:692.54px;font-family:'Liberation Sans', sans-serif;font-size:17.6px;line-height:17.6px;color:#fff;font-weight:400;white-space:pre;transform:scaleX(0.88);-webkit-text-stroke:0.6px #fff">RX 1</div>
<div style="left:246.20000000000005px;width:600px;text-align:center;top:692.54px;font-family:'Liberation Sans', sans-serif;font-size:17.6px;line-height:17.6px;color:#b9170f;font-weight:400;white-space:pre;transform:scaleX(0.88);-webkit-text-stroke:0.6px #b9170f">RX 2</div>
<div style="left:323.20000000000005px;width:600px;text-align:center;top:692.54px;font-family:'Liberation Sans', sans-serif;font-size:17.6px;line-height:17.6px;color:#b9170f;font-weight:400;white-space:pre;transform:scaleX(0.88);-webkit-text-stroke:0.6px #b9170f">RX 3</div>
<div style="left:400.6px;width:600px;text-align:center;top:692.54px;font-family:'Liberation Sans', sans-serif;font-size:17.6px;line-height:17.6px;color:#b9170f;font-weight:400;white-space:pre;transform:scaleX(0.88);-webkit-text-stroke:0.6px #b9170f">RX 4</div>
<div style="left:430px;top:745px;width:355px;height:555px;background:#2a2a2a;border:1px solid #3b3b3b;border-radius:10px;box-sizing:border-box;overflow:hidden"></div>
<div style="left:430px;top:745px;width:355px;height:52px;background:#3b3b3b;border-radius:10px 10px 0 0"></div>
<div style="left:451.8px;top:762.84px;font-family:'Liberation Sans', sans-serif;font-size:17.6px;line-height:17.6px;color:#e8e8e8;font-weight:400;white-space:pre;">Configuration</div>
<div style="left:795px;top:745px;width:355px;height:555px;background:#2a2a2a;border:1px solid #3b3b3b;border-radius:10px;box-sizing:border-box;overflow:hidden"></div>
<div style="left:795px;top:745px;width:355px;height:52px;background:#3b3b3b;border-radius:10px 10px 0 0"></div>
<div style="left:816.7px;top:762.84px;font-family:'Liberation Sans', sans-serif;font-size:17.6px;line-height:17.6px;color:#e8e8e8;font-weight:400;white-space:pre;">Video Monitor</div>
<div style="left:1160px;top:745px;width:355px;height:555px;background:#2a2a2a;border:1px solid #3b3b3b;border-radius:10px;box-sizing:border-box;overflow:hidden"></div>
<div style="left:1160px;top:745px;width:355px;height:52px;background:#3b3b3b;border-radius:10px 10px 0 0"></div>
<div style="left:1181.5px;top:762.94px;font-family:'Liberation Sans', sans-serif;font-size:17.6px;line-height:17.6px;color:#e8e8e8;font-weight:400;white-space:pre;">Status &amp; Control</div>
<div style="left:446.2px;top:815.44px;font-family:'Liberation Sans', sans-serif;font-size:16.3px;line-height:16.3px;color:#e8e8e8;font-weight:400;white-space:pre;">Antenna</div>
<div style="left:446px;top:840px;width:323px;height:50px;background:#3a3a3a;border-radius:8px"></div>
<div style="left:467.5px;top:857.38px;font-family:'Liberation Sans', sans-serif;font-size:17.2px;line-height:17.2px;color:#ededed;font-weight:400;white-space:pre;">Antenna 1</div>
<svg style="left:729.1999999999999px;top:858.5px" width="17.2" height="11.4"><path d="M3,3 L8.6,8.4 L14.2,3" fill="none" stroke="#a3a9b6" stroke-width="1.8" stroke-linecap="round" stroke-linejoin="round"/></svg>
<div style="left:446.6px;top:894.79px;font-family:'Liberation Sans', sans-serif;font-size:15.3px;line-height:15.3px;color:#6e6e6e;font-weight:400;white-space:pre;">Current: 1</div>
<div style="left:446.2px;top:928.44px;font-family:'Liberation Sans', sans-serif;font-size:16.3px;line-height:16.3px;color:#e8e8e8;font-weight:400;white-space:pre;">Frequency (MHz)</div>
<div style="left:446px;top:953px;width:323px;height:49px;background:#3a3a3a;border-radius:8px"></div>
<div style="left:467.5px;top:971.56px;font-family:'Liberation Sans', sans-serif;font-size:16.4px;line-height:16.4px;color:#ededed;font-weight:400;white-space:pre;">1532</div>
<div style="left:446.6px;top:1006.00px;font-family:'Liberation Sans', sans-serif;font-size:15.3px;line-height:15.3px;color:#6e6e6e;font-weight:400;white-space:pre;">Current: 1532 MHz</div>
<div style="left:446.2px;top:1039.94px;font-family:'Liberation Sans', sans-serif;font-size:16.3px;line-height:16.3px;color:#e8e8e8;font-weight:400;white-space:pre;">Bandwidth (MHz)</div>
<div style="left:446px;top:1065px;width:323px;height:49px;background:#3a3a3a;border-radius:8px"></div>
<div style="left:467.5px;top:1083.26px;font-family:'Liberation Sans', sans-serif;font-size:16.4px;line-height:16.4px;color:#ededed;font-weight:400;white-space:pre;">36</div>
<div style="left:446.6px;top:1118.99px;font-family:'Liberation Sans', sans-serif;font-size:15.3px;line-height:15.3px;color:#6e6e6e;font-weight:400;white-space:pre;">Current: 36 MHz</div>
<div style="left:446.2px;top:1152.94px;font-family:'Liberation Sans', sans-serif;font-size:16.3px;line-height:16.3px;color:#e8e8e8;font-weight:400;white-space:pre;">Modulation</div>
<div style="left:446px;top:1178px;width:323px;height:50px;background:#3a3a3a;border-radius:8px"></div>
<div style="left:467.5px;top:1196.57px;font-family:'Liberation Sans', sans-serif;font-size:15.8px;line-height:15.8px;color:#ededed;font-weight:400;white-space:pre;">QPSK</div>
<svg style="left:729.1999999999999px;top:1196.5px" width="17.2" height="11.4"><path d="M3,3 L8.6,8.4 L14.2,3" fill="none" stroke="#a3a9b6" stroke-width="1.8" stroke-linecap="round" stroke-linejoin="round"/></svg>
<div style="left:446.6px;top:1232.49px;font-family:'Liberation Sans', sans-serif;font-size:15.3px;line-height:15.3px;color:#6e6e6e;font-weight:400;white-space:pre;">Current: QPSK</div>
<div style="left:446.2px;top:1265.64px;font-family:'Liberation Sans', sans-serif;font-size:16.3px;line-height:16.3px;color:#e8e8e8;font-weight:400;white-space:pre;">FEC Rate</div>
<div style="left:446px;top:1290px;width:323px;height:50px;background:#3a3a3a;border-radius:8px"></div>
<div style="left:796px;top:959px;width:354px;height:319px;background:#000;border-radius:10px;border:1px solid #3a3a3a;box-sizing:border-box"></div>
<div style="left:672.5px;width:600px;text-align:center;top:1072.64px;font-family:'Liberation Sans', sans-serif;font-size:17.6px;line-height:17.6px;color:#4b5563;font-weight:700;white-space:pre;">NO VIDEO FEED</div>
<div style="left:672.5px;width:600px;text-align:center;top:1099.40px;font-family:'Liberation Sans', sans-serif;font-size:30px;line-height:30px;color:#6b7280;font-weight:700;white-space:pre;">SIGNAL</div>
<div style="left:672.5px;width:600px;text-align:center;top:1141.40px;font-family:'Liberation Sans', sans-serif;font-size:30px;line-height:30px;color:#6b7280;font-weight:700;white-space:pre;">LOCKED</div>
<div style="left:1176px;top:812px;width:40px;height:25px;background:#b9170f;border-radius:13px"></div>
<div style="left:1194px;top:815px;width:19px;height:19px;border-radius:50%;background:#fff"></div>
<div style="left:1226.7px;top:815.74px;font-family:'Liberation Sans', sans-serif;font-size:17.6px;line-height:17.6px;color:#fff;font-weight:400;white-space:pre;">Power</div>
<div style="left:1176.5px;top:856.84px;font-family:'Liberation Sans', sans-serif;font-size:17.6px;line-height:17.6px;color:#767676;font-weight:400;white-space:pre;">Signal Quality:</div>
<div style="left:1409px;top:852px;width:90px;height:28px;background:#283d2f;border:1px solid #2a7d46;border-radius:4px;box-sizing:border-box"></div>
<div style="left:1154px;width:600px;text-align:center;top:857.82px;font-family:'Liberation Mono', monospace;font-size:15.5px;line-height:15.5px;color:#22c55e;font-weight:400;white-space:pre;transform:scale(0.97,1.18);-webkit-text-stroke:0.5px #22c55e">GOOD</div>
<div style="left:1176.5px;top:893.16px;font-family:'Liberation Sans', sans-serif;font-size:15.1px;line-height:15.1px;color:#767676;font-weight:400;white-space:pre;">Raw C/N:</div>
<div style="right:61px;top:895.84px;font-family:'Liberation Mono', monospace;font-size:16px;line-height:16px;color:#dedede;font-weight:700;white-space:pre;">13.9 dB</div>
<div style="left:1176.5px;top:928.16px;font-family:'Liberation Sans', sans-serif;font-size:15.1px;line-height:15.1px;color:#767676;font-weight:400;white-space:pre;">Effective C/N:</div>
<div style="right:61px;top:930.84px;font-family:'Liberation Mono', monospace;font-size:16px;line-height:16px;color:#dedede;font-weight:700;white-space:pre;">13.9 dB</div>
<div style="left:1176.5px;top:963.16px;font-family:'Liberation Sans', sans-serif;font-size:15.1px;line-height:15.1px;color:#767676;font-weight:400;white-space:pre;">Power Level:</div>
<div style="right:61px;top:965.84px;font-family:'Liberation Mono', monospace;font-size:16px;line-height:16px;color:#dedede;font-weight:700;white-space:pre;">-30.5 dBm</div>
<div style="left:1176.5px;top:998.16px;font-family:'Liberation Sans', sans-serif;font-size:15.1px;line-height:15.1px;color:#767676;font-weight:400;white-space:pre;">Noise Floor:</div>
<div style="right:61px;top:1000.84px;font-family:'Liberation Mono', monospace;font-size:16px;line-height:16px;color:#dedede;font-weight:700;white-space:pre;">-44.4 dBm</div>
<div style="left:1176px;top:1030px;width:323px;height:1px;background:#444"></div>
<div style="left:1176.5px;top:1045.16px;font-family:'Liberation Sans', sans-serif;font-size:15.1px;line-height:15.1px;color:#767676;font-weight:400;white-space:pre;">ADC Level:</div>
<div style="right:61px;top:1046.54px;font-family:'Liberation Mono', monospace;font-size:16px;line-height:16px;color:#22c55e;font-weight:700;white-space:pre;">-8.5 dBFS</div>
<div style="left:1176.5px;top:1081.66px;font-family:'Liberation Sans', sans-serif;font-size:15.1px;line-height:15.1px;color:#767676;font-weight:400;white-space:pre;">ADC Status:</div>
<div style="left:1409px;top:1076px;width:90px;height:28px;background:#283d2f;border:1px solid #2a7d46;border-radius:4px;box-sizing:border-box"></div>
<div style="left:1154px;width:600px;text-align:center;top:1082.02px;font-family:'Liberation Mono', monospace;font-size:15.5px;line-height:15.5px;color:#22c55e;font-weight:400;white-space:pre;transform:scale(1.0,1.18);-webkit-text-stroke:0.5px #22c55e">OPTIMAL</div>
</body></html>
